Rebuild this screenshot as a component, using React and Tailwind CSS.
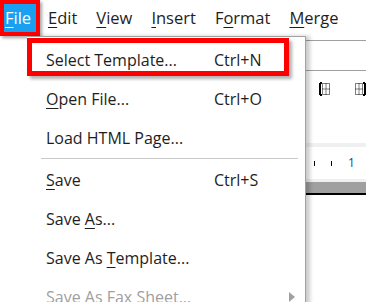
import React from 'react'

const FONT = { fontFamily: '"Open Sans", "Noto Sans", sans-serif' }

function U({ children }) {
  return <span className="underline underline-offset-[3px] decoration-1">{children}</span>
}

const TOP = [
  { key: 'Edit', label: <><U>E</U>dit</> },
  { key: 'View', label: <><U>V</U>iew</> },
  { key: 'Insert', label: <><U>I</U>nsert</> },
  { key: 'Format', label: <>F<U>o</U>rmat</> },
  { key: 'Merge', label: <><U>M</U>erge</> },
]

const ITEMS = [
  { label: <>Select Template...</>, sc: 'Ctrl+N' },
  { label: <><U>O</U>pen File...</>, sc: 'Ctrl+O' },
  { label: <>Load HTML Page...</> },
  { sep: true },
  { label: <><U>S</U>ave</>, sc: 'Ctrl+S' },
  { label: <>Save <U>A</U>s...</> },
  { label: <>Save As <U>T</U>emplate...</> },
  { label: <>Save As Fax Sheet...</>, disabled: true, sub: true },
]

function ToolIcon({ left }) {
  return (
    <svg width="12" height="14" viewBox="0 0 12 14" className="shrink-0">
      {left ? <path d="M1 1h2M1 1v12M1 13h2" stroke="#000" strokeWidth="2" fill="none" /> : <path d="M11 1H9M11 1v12M11 13H9" stroke="#000" strokeWidth="2" fill="none" />}
      <rect x={left ? 3.5 : 1.5} y="1.5" width="7" height="11" fill="none" stroke="#000" strokeWidth="1" strokeDasharray="1 1" />
      <path d={left ? 'M3.5 7h7M7 1.5v11' : 'M1.5 7h7M5 1.5v11'} stroke="#000" strokeWidth="1" strokeDasharray="1 1" />
    </svg>
  )
}

export default function App() {
  return (
    <div className="relative w-[366px] h-[302px] overflow-hidden bg-white text-[#1e1e1e]" style={FONT}>
      {/* menu bar */}
      <div className="flex items-center h-[36px] text-[16.5px] leading-none">
        <div className="relative h-[36px] w-[40px] bg-[#19a0f0] border-[4px] border-[#ff0000] shadow-[2px_2px_3px_rgba(0,0,0,0.35)] flex items-center pl-[1px] text-white">
          <span><U>F</U>ile</span>
        </div>
        <div className="flex items-center gap-[19px] pl-[8px]">
          {TOP.map(t => <span key={t.key}>{t.label}</span>)}
        </div>
      </div>

      {/* document window behind the menu */}
      <div className="absolute left-[300px] top-[36px] right-0">
        <div className="h-[4px]" />
        <div className="border-t border-[#a0a0a0] h-[30px]" />
        <div className="border-t border-[#a0a0a0] h-[73px] flex items-start gap-[23px] pl-[19px] pt-[11px]">
          <ToolIcon left />
          <ToolIcon />
        </div>
        <div className="h-[4px] bg-[#f0f0f0]" />
        <div className="h-[32px] flex items-center gap-[16px] pl-[14px] text-[12px] text-[#1a3f8f]">
          <span className="w-px h-[5px] bg-black" />
          <span className="w-px h-[5px] bg-black" />
          <span className="leading-none">1</span>
        </div>
        <div className="h-[3px] bg-[#f0f0f0]" />
        <div className="h-[13px] bg-[#a0a0a0] border-b-[2px] border-black" />
      </div>

      {/* dropdown */}
      <div className="absolute left-[27px] top-[36px] w-[279px] h-[280px] bg-white border-t border-r border-[#a0a0a0] shadow-[4px_0_4px_rgba(0,0,0,0.2)] pt-[3px] text-[16px]">
        {ITEMS.map((it, i) =>
          it.sep ? (
            <div key={i} className="h-[3px] flex items-center pl-[14px] pr-[7px]">
              <div className="h-px w-full bg-[#c8c8c8]" />
            </div>
          ) : (
            <div key={i} className={`relative h-[39px] flex items-center pl-[19px] ${it.disabled ? 'text-[#a0a0a0]' : ''}`}>
              <span className="w-[168px]">{it.label}</span>
              {it.sc && <span>{it.sc}</span>}
              {it.sub && (
                <svg width="6" height="10" viewBox="0 0 6 10" className="absolute left-[262px]">
                  <path d="M0 0l6 5-6 5z" fill="#a0a0a0" />
                </svg>
              )}
            </div>
          )
        )}
      </div>

      {/* highlight annotation */}
      <div className="absolute left-[27px] top-[38px] w-[262px] h-[38px] border-[5px] border-[#ff0000] shadow-[3px_3px_3px_rgba(0,0,0,0.3)]" />
    </div>
  )
}
